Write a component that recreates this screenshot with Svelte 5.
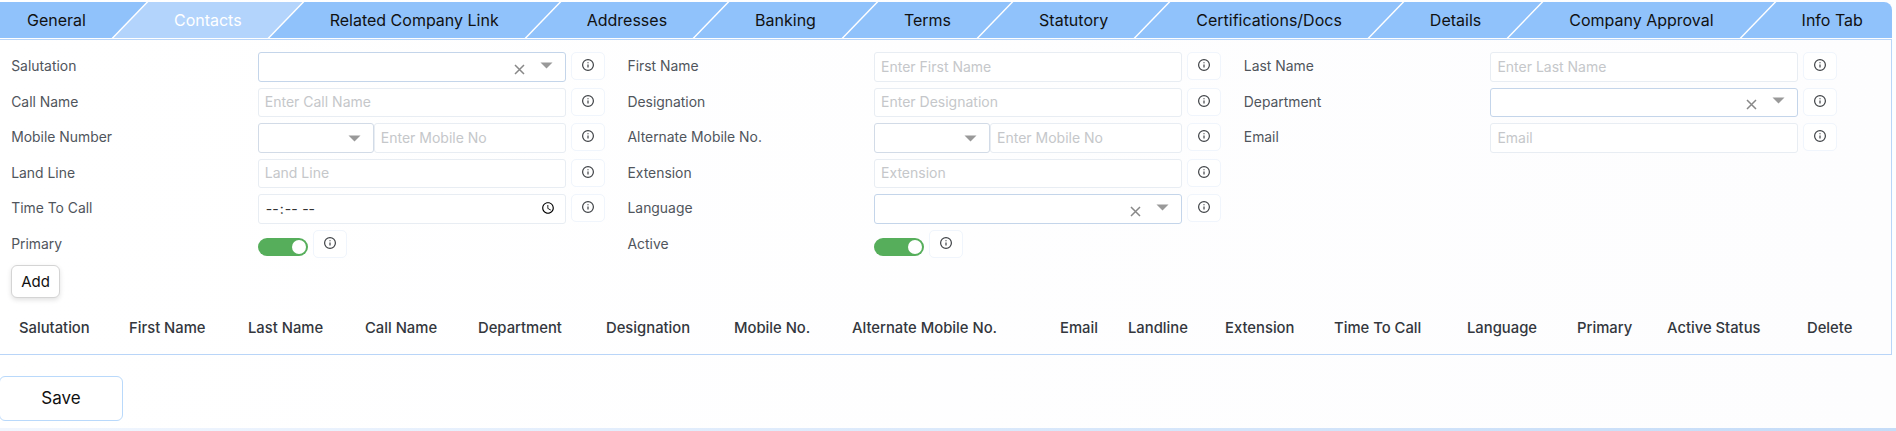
<script>
  const tabs = ['General','Contacts','Related Company Link','Addresses','Banking','Terms','Statutory','Certifications/Docs','Details','Company Approval','Info Tab'];
  const columns = [
    [
      { label: 'Salutation', type: 'select' },
      { label: 'Call Name', type: 'text', ph: 'Enter Call Name' },
      { label: 'Mobile Number', type: 'phone', ph: 'Enter Mobile No' },
      { label: 'Land Line', type: 'text', ph: 'Land Line' },
      { label: 'Time To Call', type: 'time' },
      { label: 'Primary', type: 'toggle' }
    ],
    [
      { label: 'First Name', type: 'text', ph: 'Enter First Name' },
      { label: 'Designation', type: 'text', ph: 'Enter Designation' },
      { label: 'Alternate Mobile No.', type: 'phone', ph: 'Enter Mobile No' },
      { label: 'Extension', type: 'text', ph: 'Extension' },
      { label: 'Language', type: 'select' },
      { label: 'Active', type: 'toggle' }
    ],
    [
      { label: 'Last Name', type: 'text', ph: 'Enter Last Name' },
      { label: 'Department', type: 'select' },
      { label: 'Email', type: 'text', ph: 'Email' }
    ]
  ];
  const headers = ['Salutation','First Name','Last Name','Call Name','Department','Designation','Mobile No.','Alternate Mobile No.','Email','Landline','Extension','Time To Call','Language','Primary','Active Status','Delete'];
</script>

{#snippet info()}
  <button class="info" type="button" aria-label="Info">
    <svg width="14" height="14" viewBox="0 0 14 14" fill="none" stroke="#3f4246" stroke-width="1.2">
      <circle cx="7" cy="7" r="5.4" />
      <path d="M7 6.4v3.2M7 4.2v1" />
    </svg>
  </button>
{/snippet}

{#snippet caret()}
  <svg class="caret" width="13" height="7" viewBox="0 0 13 7"><path d="M0.5 0.5h12L6.500 6.500z" fill="#999" /></svg>
{/snippet}

<div class="page">
  <nav class="tabs">
    {#each tabs as tab, i}
      <div class="tab" class:active={i === 1}><span>{tab}</span></div>
    {/each}
  </nav>

  <section class="panel">
    <div class="form">
      {#each columns as col}
        <div class="col">
          {#each col as f}
            <div class="row">
              <span class="label">{f.label}</span>
              {#if f.type === 'text'}
                <input class="input" placeholder={f.ph} />
                {@render info()}
              {:else if f.type === 'select'}
                <div class="input select">
                  <svg class="clear" width="11" height="11" viewBox="0 0 11 11" stroke="#888" stroke-width="1.5"><path d="M1 1l9 9M10 1l-9 9" /></svg>
                  {@render caret()}
                </div>
                {@render info()}
              {:else if f.type === 'phone'}
                <div class="phone">
                  <div class="input code">{@render caret()}</div>
                  <input class="input number" placeholder={f.ph} />
                </div>
                {@render info()}
              {:else if f.type === 'time'}
                <input class="input time" type="time" />
                {@render info()}
              {:else}
                <div class="toggle"><span class="knob"></span></div>
                {@render info()}
              {/if}
            </div>
          {/each}
        </div>
      {/each}
    </div>

    <button class="add" type="button">Add</button>

    <div class="thead">
      {#each headers as h}
        <div class="th">{h}</div>
      {/each}
    </div>
  </section>

  <button class="save" type="button">Save</button>
  <div class="band"></div>
</div>

<style>
  :global(body) {
    margin: 0;
    overflow: hidden;
    font-family: Inter, "Liberation Sans", sans-serif;
  }
  .page {
    height: 431px;
    padding-top: 2px;
    box-sizing: border-box;
    display: flex;
    flex-direction: column;
    background: linear-gradient(90deg, #fff, #fdfdfe);
  }
  .tabs {
    display: flex;
    height: 36px;
    width: 1892px;
    background: #90c2fb;
    border-top-right-radius: 8px;
    overflow: hidden;
    flex: none;
  }
  .tab {
    position: relative;
    padding: 0 44px 1px;
    display: flex;
    align-items: center;
    font-size: 16px;
    line-height: 34px;
    color: #111;
    white-space: nowrap;
  }
  .tab span { position: relative; }
  .tab:first-child { padding-left: 27px; }
  .tab:last-child { padding-right: 18px; }
  .tab:not(:last-child)::after {
    content: '';
    position: absolute;
    top: 0;
    bottom: 0;
    right: -1px;
    width: 2px;
    background: #fff;
    transform: skewX(-44deg);
    z-index: 1;
  }
  .tab.active { color: #fff; }
  .tab.active::before {
    content: '';
    position: absolute;
    inset: 0;
    background: #b3d4fc;
    transform: skewX(-44deg);
  }
  .panel {
    margin-top: 1px;
    width: 1892px;
    height: 316px;
    box-sizing: border-box;
    border: 1px solid #b9d5f8;
    border-left: 0;
    padding-top: 12.400px;
    flex: none;
  }
  .form {
    display: grid;
    grid-template-columns: repeat(3, 616.300px);
    padding-left: 11.200px;
    height: 212.600px;
  }
  .col { display: flex; flex-direction: column; }
  .row {
    display: flex;
    align-items: flex-start;
    height: 35.500px;
  }
  .label {
    width: 246.600px;
    flex: none;
    font-size: 13.900px;
    line-height: 28px;
    color: #50555c;
  }
  .input {
    box-sizing: border-box;
    width: 308px;
    height: 29.300px;
    flex: none;
    border: 1px solid #e8edf3;
    border-radius: 3px;
    background: #fff;
    font: 14px Inter, sans-serif;
    padding: 0 6px 2px;
    outline: none;
    color: #222;
  }
  .input::placeholder { color: #c5c7ca; opacity: 1; }
  .select {
    display: flex;
    align-items: center;
    justify-content: flex-end;
    border-color: #c4d5ea;
    padding: 0 12px 0 6px;
    gap: 15px;
  }
  .clear { margin-top: 4px; }
  .caret { margin-top: -4px; }
  .phone { display: flex; width: 308px; flex: none; }
  .code {
    width: 116px;
    display: flex;
    align-items: center;
    justify-content: flex-end;
    padding: 0 12px 0 6px;
    border-color: #d2dbe7;
  }
  .code .caret { margin-top: 0; }
  .number { width: 192px; }
  .time { color: #333; letter-spacing: 0.6px; }
  .info {
    box-sizing: border-box;
    width: 34px;
    height: 28px;
    margin: 0 0 0 5px;
    padding: 0 0 2px;
    flex: none;
    display: flex;
    align-items: center;
    justify-content: center;
    background: #fff;
    border: 1px solid #f0f5fc;
    border-radius: 5px;
  }
  .toggle {
    position: relative;
    width: 50px;
    height: 18px;
    margin-top: 8px;
    border-radius: 9px;
    background: #56ae5b;
    flex: none;
  }
  .knob {
    position: absolute;
    right: 2px;
    top: 2px;
    width: 14px;
    height: 14px;
    border-radius: 50%;
    background: #fff;
  }
  .add {
    display: block;
    margin-left: 11px;
    width: 49px;
    height: 33px;
    padding: 0;
    background: #fff;
    border: 1px solid #d4d4d4;
    border-radius: 6px;
    box-shadow: 0 2px 5px rgba(0, 0, 0, 0.12);
    font: 15px Inter, sans-serif;
    color: #111;
  }
  .thead {
    display: grid;
    grid-template-columns: 110px 119px 117px 113px 128px 128px 118px 208px 68px 97px 109px 133px 110px 90px 140px 1fr;
    padding-left: 19px;
    margin-top: 20px;
  }
  .th {
    font-size: 14.800px;
    font-weight: 500;
    line-height: 20px;
    color: #33373d;
    white-space: nowrap;
  }
  .save {
    margin: 21px 0 0 -1px;
    width: 124px;
    height: 45px;
    padding: 0 0 1px;
    background: #fff;
    border: 1px solid #b9d9fb;
    border-radius: 6px;
    font: 17px Inter, sans-serif;
    color: #111;
    align-self: flex-start;
    flex: none;
  }
  .band {
    margin-top: auto;
    height: 3px;
    background: linear-gradient(90deg, #f1f6fe, #c5dcf8);
  }
</style>
